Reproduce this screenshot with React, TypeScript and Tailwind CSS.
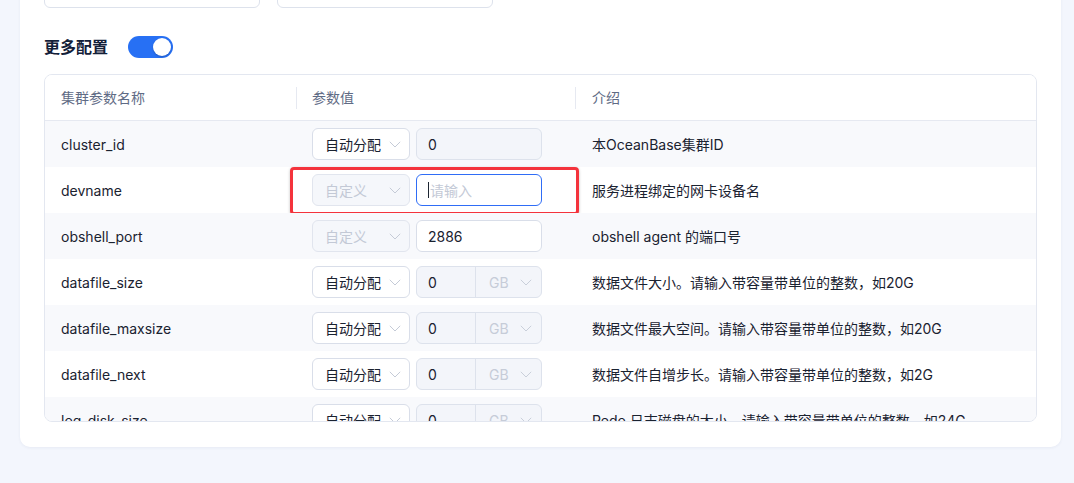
import React from "react";

const Chevron = ({ className = "" }: { className?: string }) => (
  <svg width="12" height="7" viewBox="0 0 12 7" className={className} fill="none">
    <path d="M0.8 0.8 L6 6 L11.2 0.8" stroke="currentColor" strokeWidth="1" />
  </svg>
);

type Row = {
  name: string;
  mode: "auto" | "custom";
  value: "plain" | "unit" | "focus" | "edit";
  v?: string;
  desc: string;
};

const rows: Row[] = [
  { name: "cluster_id", mode: "auto", value: "plain", v: "0", desc: "本OceanBase集群ID" },
  { name: "devname", mode: "custom", value: "focus", desc: "服务进程绑定的网卡设备名" },
  { name: "obshell_port", mode: "custom", value: "edit", v: "2886", desc: "obshell agent 的端口号" },
  { name: "datafile_size", mode: "auto", value: "unit", v: "0", desc: "数据文件大小。请输入带容量带单位的整数，如20G" },
  { name: "datafile_maxsize", mode: "auto", value: "unit", v: "0", desc: "数据文件最大空间。请输入带容量带单位的整数，如20G" },
  { name: "datafile_next", mode: "auto", value: "unit", v: "0", desc: "数据文件自增步长。请输入带容量带单位的整数，如2G" },
  { name: "log_disk_size", mode: "auto", value: "unit", v: "0", desc: "Redo 日志磁盘的大小。请输入带容量带单位的整数，如24G" },
];

function ModeSelect({ mode }: { mode: "auto" | "custom" }) {
  if (mode === "auto") {
    return (
      <div className="flex h-[32px] w-[98px] items-center justify-between rounded-[6px] border border-[#d9dee9] bg-white pl-[12px] pr-[8px] text-[14px] text-[#1a2230]">
        <span>自动分配</span>
        <Chevron className="text-[#c5cbd7]" />
      </div>
    );
  }
  return (
    <div className="flex h-[32px] w-[98px] items-center justify-between rounded-[6px] border border-[#e1e5ee] bg-[#f5f7fb] pl-[12px] pr-[8px] text-[14px] text-[#c3c9d6]">
      <span>自定义</span>
      <Chevron className="text-[#c5cbd7]" />
    </div>
  );
}

function ValueInput({ r }: { r: Row }) {
  if (r.value === "plain") {
    return (
      <div className="flex h-[32px] w-[126px] items-center rounded-[6px] border border-[#dde2ec] bg-[#f3f5fa] px-[11px] text-[14px] text-[#1a2230]">
        {r.v}
      </div>
    );
  }
  if (r.value === "edit") {
    return (
      <div className="flex h-[32px] w-[126px] items-center rounded-[6px] border border-[#d9dee9] bg-white px-[11px] text-[14px] text-[#1a2230]">
        {r.v}
      </div>
    );
  }
  if (r.value === "focus") {
    return (
      <div className="flex h-[32px] w-[126px] items-center rounded-[6px] border border-[#2f6df6] bg-white px-[11px] text-[14px] text-[#c3c9d6]">
        <span className="mr-[1px] h-[16px] w-[1px] bg-[#1d2532]" />
        <span>请输入</span>
      </div>
    );
  }
  return (
    <div className="flex h-[32px] w-[126px] overflow-hidden rounded-[6px] border border-[#dde2ec] bg-[#f3f5fa] text-[14px]">
      <div className="flex w-[59px] items-center border-r border-[#dde2ec] px-[11px] text-[#1a2230]">{r.v}</div>
      <div className="flex flex-1 items-center justify-between pl-[13px] pr-[9px] text-[#c6ccd8]">
        <span>GB</span>
        <Chevron className="text-[#c9cfda]" />
      </div>
    </div>
  );
}

export default function App() {
  return (
    <div
      className="h-[483px] overflow-hidden bg-[#f3f6fd] pl-[20px] pr-[13px]"
      style={{ fontFamily: 'Inter, "Noto Sans CJK SC", "Noto Sans", sans-serif' }}
    >
      <div className="-mt-[48px] rounded-[10px] bg-white px-[24px] pb-[25px] pt-[24px] shadow-[0_1px_3px_rgba(30,50,110,0.06)]">
        <div className="flex gap-[17px]">
          <div className="h-[32px] w-[216px] rounded-[6px] border border-[#dde2ec] bg-white" />
          <div className="h-[32px] w-[216px] rounded-[6px] border border-[#dde2ec] bg-white" />
        </div>

        <div className="mt-[28px] flex h-[22px] items-center gap-[20px]">
          <span className="text-[16px] font-bold text-[#132039]">更多配置</span>
          <div className="flex h-[22px] w-[45px] items-center justify-end rounded-full bg-[#2770f4] px-[2px]">
            <div className="h-[18px] w-[18px] rounded-full bg-white shadow-[0_1px_2px_rgba(0,0,0,0.2)]" />
          </div>
        </div>

        <div className="mt-[16px] h-[348px] overflow-hidden rounded-[8px] border border-[#e3e7f0]">
          <div className="flex h-[46px] items-center border-b border-[#e6e9f1] bg-white text-[14px] text-[#5f6b85]">
            <div className="w-[251px] pl-[16px]">集群参数名称</div>
            <div className="flex w-[279px] items-center">
              <span className="h-[22px] w-[1px] bg-[#e6e9f1]" />
              <span className="pl-[15px]">参数值</span>
            </div>
            <div className="flex flex-1 items-center">
              <span className="h-[22px] w-[1px] bg-[#e6e9f1]" />
              <span className="pl-[16px]">介绍</span>
            </div>
          </div>

          {rows.map((r, i) => (
            <div
              key={r.name}
              className={`relative flex h-[46px] items-center text-[14px] text-[#1a2230] ${
                i % 2 === 0 ? "bg-[#f8f9fc]" : "bg-white"
              }`}
            >
              <div className="w-[251px] pl-[16px]">{r.name}</div>
              <div className="flex w-[279px] items-center gap-[6px] pl-[16px]">
                <ModeSelect mode={r.mode} />
                <ValueInput r={r} />
              </div>
              <div className="flex-1 pl-[17px]">{r.desc}</div>
              {r.value === "focus" && (
                <div className="pointer-events-none absolute left-[245px] top-0 h-[48px] w-[289px] rounded-[4px] border-[3px] border-[#f4333c] shadow-[0_1px_3px_rgba(0,0,0,0.25)]" />
              )}
            </div>
          ))}
        </div>
      </div>
    </div>
  );
}
